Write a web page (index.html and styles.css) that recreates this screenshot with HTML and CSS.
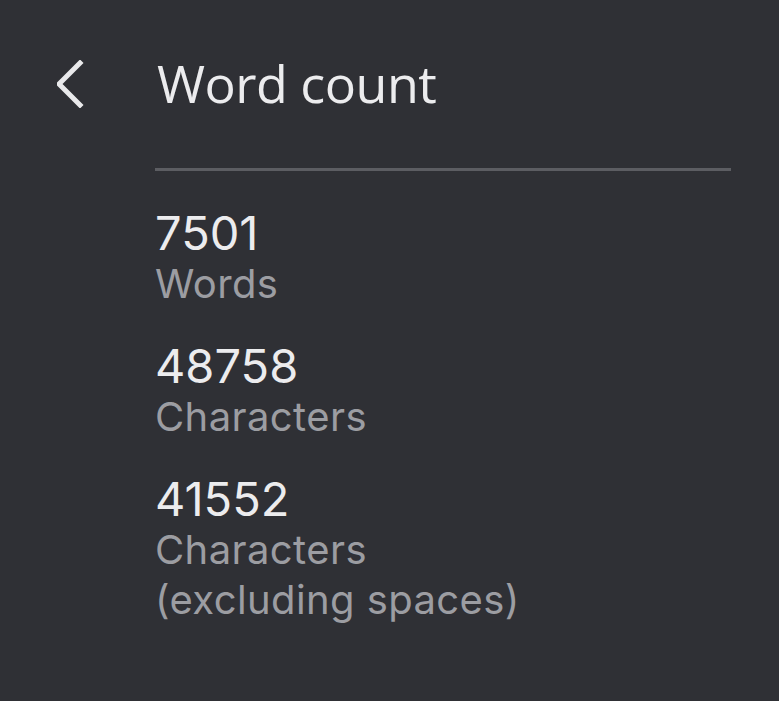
FILE: index.html
```html
<!DOCTYPE html>
<html lang="en">
<head>
    <meta charset="UTF-8">
    <title>Word count</title>
    <link rel="stylesheet" href="styles.css">
</head>
<body>
    <div class="panel">
        <!-- Header with back button -->
        <div class="header">
            <button class="back" aria-label="Back">
                <svg width="30" height="48" viewBox="0 0 30 48">
                    <path d="M23 3 L2 24 L23 45" fill="none" stroke="#e9e9eb" stroke-width="5" stroke-linecap="square"/>
                </svg>
            </button>
            <h1>Word count</h1>
        </div>
        <div class="content">
            <hr class="divider">
            <!-- Counts -->
            <div class="stat">
                <div class="value">7501</div>
                <div class="label">Words</div>
            </div>
            <div class="stat">
                <div class="value">48758</div>
                <div class="label">Characters</div>
            </div>
            <div class="stat">
                <div class="value">41552</div>
                <div class="label">Characters<br>(excluding spaces)</div>
            </div>
        </div>
    </div>
</body>
</html>
```

FILE: styles.css
```css
/* Dark word count panel */
html, body {
    height: 100%;
}
body {
    margin: 0;
    background-color: #2f3035;
    font-family: Inter, Roboto, "Liberation Sans", sans-serif;
    color: #ececee;
}
.panel {
    padding: 52px 48px 0 57px;
}
.header {
    display: flex;
    align-items: center;
    height: 64px;
}
.back {
    background: none;
    border: none;
    padding: 0;
    width: 100px;
    display: flex;
    align-items: center;
    cursor: pointer;
}
h1 {
    margin: 0 0 4px 0;
    font-family: "Open Sans", Roboto, sans-serif;
    font-weight: 400;
    font-size: 52px;
    letter-spacing: -0.5px;
    color: #ececee;
}
.content {
    margin-left: 98px;
}
.divider {
    border: none;
    height: 3px;
    background-color: #5c5d62;
    margin: 52px 0 36px 0;
}
.stat {
    margin-bottom: 31px;
}
.value {
    font-size: 47px;
    line-height: 52px;
}
.label {
    font-size: 40px;
    line-height: 50px;
    letter-spacing: 0.4px;
    color: #9c9da2;
}
```
